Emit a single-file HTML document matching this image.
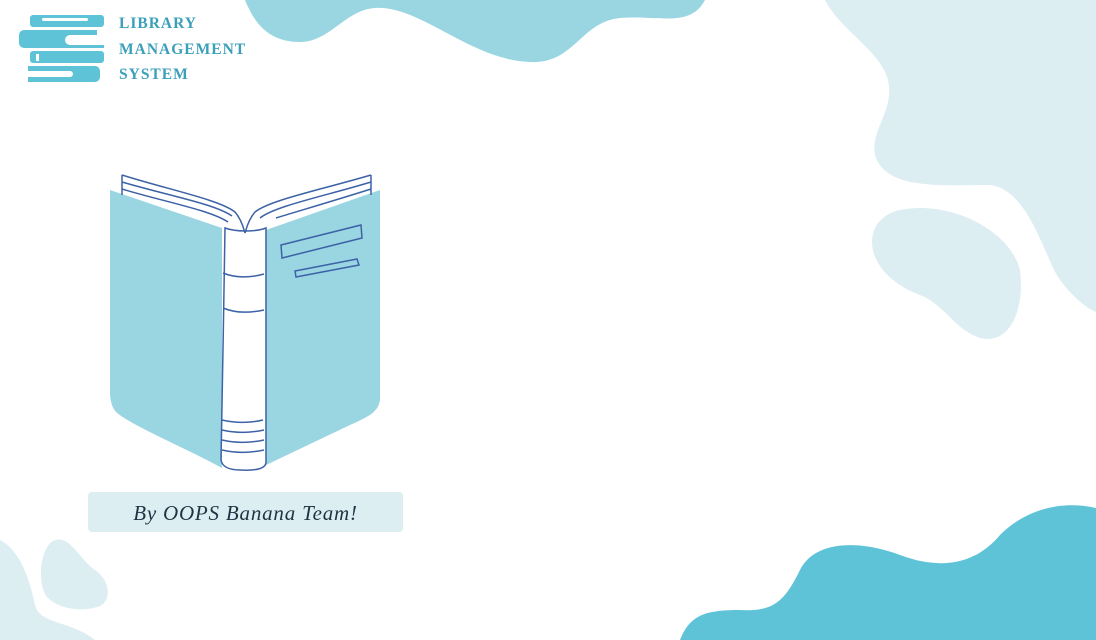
<!DOCTYPE html>
<html><head><style>
body{margin:0;width:1096px;height:640px;overflow:hidden;background:#fff;position:relative;font-family:"Liberation Serif",serif}
svg{position:absolute;left:0;top:0}
.t{position:absolute;left:119px;color:#3a9fb9;font-weight:bold;font-size:15.5px;letter-spacing:1px}
.cap{position:absolute;left:88px;top:492px;width:315px;height:40px;background:#ddeef3;border-radius:4px;text-align:center;line-height:42px;font-size:21px;color:#1f3442;letter-spacing:0.8px;font-style:italic}
</style></head><body>
<svg width="1096" height="640" viewBox="0 0 1096 640">
<path d="M245 0 C255 25 270 42 300 42 C330 42 345 10 375 8 C420 5 470 60 530 62 C575 64 580 22 620 18 C660 15 690 28 705 0Z" fill="#9ad5e2"/>
<path d="M825 0 C840 30 880 50 888 80 C895 110 870 130 875 155 C885 190 940 185 990 185 C1030 190 1045 260 1060 280 C1075 300 1090 310 1096 312 L1096 0Z" fill="#ddeef3"/>
<path d="M900 210 C950 200 1010 230 1020 270 C1025 310 1010 345 980 338 C955 330 945 305 920 295 C880 280 865 250 875 228 C880 218 890 212 900 210Z" fill="#ddeef3"/>
<path d="M680 640 C690 615 705 610 740 610 C775 612 785 600 800 570 C815 540 860 540 900 555 C940 570 975 565 1000 535 C1025 510 1060 500 1096 508 L1096 640Z" fill="#5fc3d8"/>
<path d="M0 540 C20 550 30 580 35 605 C40 625 70 620 95 640 L0 640Z" fill="#ddeef3"/>
<path d="M55 540 C70 535 80 560 95 570 C110 580 112 600 100 606 C85 612 60 610 48 598 C36 585 40 545 55 540Z" fill="#ddeef3"/>
<g fill="#5fc3d8">
<rect x="30" y="15" width="74" height="12" rx="3"/>
<path d="M24 30 H97 V35 H70 a5 5 0 0 0 0 10 H104 V48 H24 a5 5 0 0 1 -5 -5 V35 a5 5 0 0 1 5 -5Z"/>
<rect x="30" y="51" width="74" height="12" rx="3"/>
<path d="M28 66 H95 a5 5 0 0 1 5 5 V77 a5 5 0 0 1 -5 5 H28 V77 H70 a3 3 0 0 0 0 -6 H28Z"/>
</g>
<rect x="42" y="18" width="46" height="3" rx="1.5" fill="#fff"/>
<rect x="36" y="54" width="3" height="7" fill="#fff"/>
<path d="M110 190 L222 228 L222 468 C190 450 130 425 116 412 C110 405 110 395 110 390Z" fill="#9ad5e2"/>
<path d="M266 230 L380 190 L380 400 C378 412 370 416 350 425 L266 465Z" fill="#9ad5e2"/>
<g fill="none" stroke="#3d62a6" stroke-width="1.5">
<path d="M122 175 L122 195 M122 175 C170 190 220 200 235 212 C242 220 244 230 245 233 M122 182 C170 196 215 204 232 216 M122 189 C165 202 210 210 228 222"/>
<path d="M371 175 L371 195 M371 175 C320 190 270 200 255 212 C248 220 246 230 245 233 M371 182 C325 196 275 206 260 218 M371 189 C330 202 295 212 276 218"/>
<path d="M225 228 C224 300 222 400 221 460 C222 466 228 470 240 470 C258 471 266 468 266 462 L266 228 C256 232 236 232 225 228Z"/>
<path d="M223 273 C235 278 250 278 264 274 M223 308 C235 313 250 313 264 310 M222 420 C235 423 250 423 263 420 M222 430 C235 433 250 433 264 430 M222 440 C235 443 250 443 264 440 M222 450 C235 453 250 453 264 450"/>
<path d="M281 245 L361 225 L362 238 L282 258Z"/>
<path d="M295 271 L357 259 L359 265 L296 277Z"/>
</g>
</svg>
<div class="t" style="top:15px">LIBRARY</div>
<div class="t" style="top:41px">MANAGEMENT</div>
<div class="t" style="top:66px">SYSTEM</div>
<div class="cap">By OOPS Banana Team!</div>
</body></html>
